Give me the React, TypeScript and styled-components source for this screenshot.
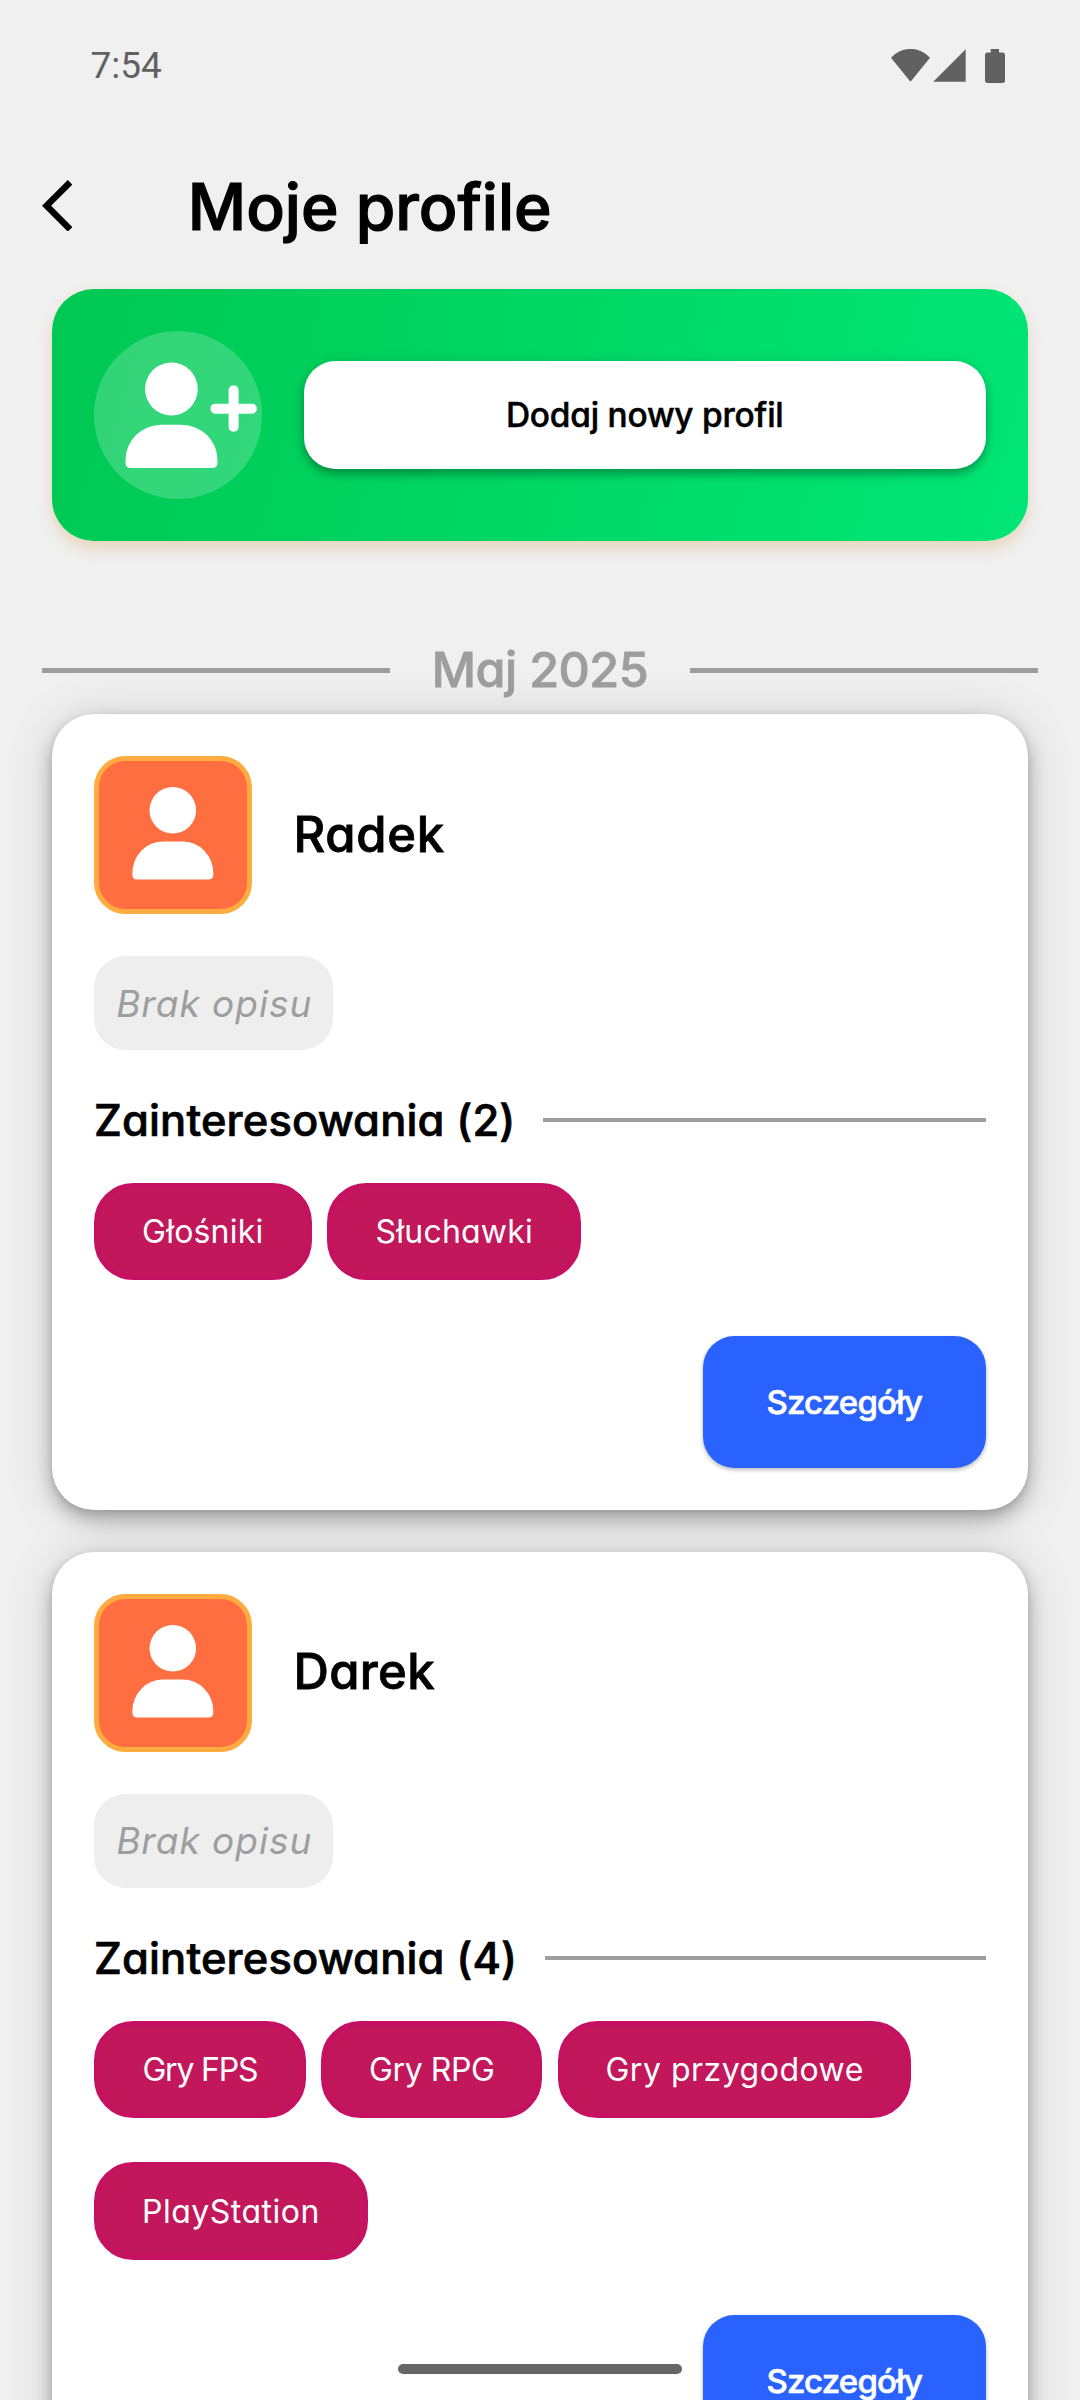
import React from "react";
import styled, { createGlobalStyle } from "styled-components";

const GlobalStyle = createGlobalStyle`
  *, *::before, *::after { box-sizing: border-box; }
  body { margin: 0; background: #f0f0f0; }
`;

const Screen = styled.div`
  position: relative;
  width: 1080px;
  height: 2400px;
  overflow: hidden;
  display: flex;
  flex-direction: column;
  background: #f0f0f0;
  color: #000;
  font-family: Inter, "Open Sans", sans-serif;
  font-feature-settings: "cv11";
`;

const StatusBar = styled.div`
  flex: none;
  height: 131px;
  padding: 0 75px 0 90.5px;
  display: flex;
  align-items: center;
  justify-content: space-between;
  color: #616161;
`;

const Clock = styled.span`
  font-family: Roboto, sans-serif;
  font-size: 37px;
`;

const StatusIcons = styled.svg`
  display: block;
  width: 114px;
  height: 34px;
  fill: currentColor;
`;

const Header = styled.header`
  flex: none;
  height: 150px;
  padding-left: 42px;
  display: flex;
  align-items: center;
`;

const BackIcon = styled.svg`
  display: block;
  width: 30.4px;
  height: 51.6px;
  margin: -1px 114.4px 0 0;
`;

const Label = styled.span<{ $size: number; $spacing?: number; $stroke?: number }>`
  white-space: nowrap;
  font-size: ${(p) => p.$size}px;
  font-weight: ${(p) => (p.$stroke ? 500 : 400)};
  letter-spacing: ${(p) => p.$spacing ?? 0}px;
  -webkit-text-stroke: ${(p) => p.$stroke ?? 0}px currentColor;
`;

const Title = styled(Label).attrs({ as: "h1" })`
  margin: 1px 0 0 1px;
`;

const Banner = styled.section`
  flex: none;
  height: 252px;
  margin: 8.25px 52.5px 0 52px;
  padding: 0 42px;
  display: flex;
  align-items: center;
  gap: 42px;
  border-radius: 42px;
  background: linear-gradient(104.5deg, #00c853, #00e676);
  box-shadow: 0 8px 14px rgba(215, 165, 95, 0.34);
`;

const BannerIcon = styled.svg`
  flex: none;
  width: 168px;
  height: 168px;
  border-radius: 50%;
  background: rgba(255, 255, 255, 0.2);
`;

const AddButton = styled.button`
  flex: 1;
  height: 108px;
  padding: 0;
  border: 0;
  border-radius: 31.5px;
  background: #fff;
  color: #000;
  font: inherit;
  font-feature-settings: inherit;
  box-shadow: 0 5px 10px rgba(0, 0, 0, 0.3), 0 1px 16px rgba(0, 0, 0, 0.06);
`;

const MonthRow = styled.div`
  flex: none;
  height: 88.4px;
  margin: 84.75px 42px 0;
  display: flex;
  align-items: center;
  color: #9e9e9e;
`;

const Rule = styled.div<{ $weight: number }>`
  flex: 1;
  height: ${(p) => p.$weight}px;
  background: #9e9e9e;
`;

const MonthName = styled.div`
  flex: 0 0 300.5px;
  padding-bottom: 2px;
  text-align: center;
`;

const CardList = styled.main`
  display: flex;
  flex-direction: column;
  gap: 42.5px;
  padding: 0 52.5px 0 52px;
`;

const Card = styled.article`
  flex: none;
  padding: 42px;
  display: flex;
  flex-direction: column;
  align-items: flex-start;
  border-radius: 42px;
  background: #fff;
  box-shadow: 0 9px 18px rgba(0, 0, 0, 0.26), 0 2px 6px rgba(0, 0, 0, 0.1),
    0 4px 50px rgba(0, 0, 0, 0.14);
`;

const Person = styled.div`
  display: flex;
  align-items: center;
  gap: 42px;
`;

const PersonName = styled.h2`
  margin: 0;
  padding-bottom: 2px;
  font-size: inherit;
  line-height: 1;
`;

const Avatar = styled.svg`
  width: 157.5px;
  height: 157.5px;
  border: 5.25px solid #ffab40;
  border-radius: 31.5px;
  background: #ff6e40;
`;

const Description = styled.div`
  width: 238.5px;
  height: 94.4px;
  margin-top: 42px;
  padding-left: 2px;
  display: flex;
  align-items: center;
  justify-content: center;
  border-radius: 31.5px;
  background: #eee;
  color: #9e9e9e;
  font-style: italic;
`;

const InterestsHeading = styled.div<{ $labelWidth: number }>`
  width: 100%;
  height: 56px;
  margin: 42px 0 34.8px;
  display: grid;
  grid-template-columns: ${(p) => p.$labelWidth}px 1fr;
  align-items: center;
`;

const Chips = styled.div`
  display: flex;
  flex-wrap: wrap;
  gap: 44.1px 15.75px;
`;

const Chip = styled.span<{ $width: number }>`
  width: ${(p) => p.$width}px;
  height: 97.4px;
  display: flex;
  align-items: center;
  justify-content: center;
  border: 5.25px solid #c51162;
  border-radius: 39.4px;
  background: #c2185b;
  color: #fff;
`;

const DetailsButton = styled.button`
  align-self: flex-end;
  width: 282.5px;
  height: 131.5px;
  margin-top: 55.7px;
  padding: 0;
  border: 0;
  border-radius: 31.5px;
  background: #2962ff;
  color: #fff;
  font: inherit;
  font-feature-settings: inherit;
  box-shadow: 0 2px 4px rgba(0, 0, 0, 0.28);
`;

const GestureBar = styled.div`
  position: absolute;
  left: 398px;
  bottom: 26px;
  width: 284px;
  height: 10px;
  border-radius: 5px;
  background: #666;
`;

interface Interest {
  name: string;
  width: number;
  spacing: number;
}

interface Profile {
  name: string;
  nameSpacing: number;
  labelWidth: number;
  interests: Interest[];
}

const profiles: Profile[] = [
  {
    name: "Radek",
    nameSpacing: 0.7,
    labelWidth: 449.2,
    interests: [
      { name: "Głośniki", width: 217.5, spacing: 0.2 },
      { name: "Słuchawki", width: 254, spacing: 0.2 },
    ],
  },
  {
    name: "Darek",
    nameSpacing: 0.3,
    labelWidth: 451.2,
    interests: [
      { name: "Gry FPS", width: 211.7, spacing: -1.2 },
      { name: "Gry RPG", width: 220.7, spacing: -0.4 },
      { name: "Gry przygodowe", width: 353.6, spacing: 0.5 },
      { name: "PlayStation", width: 273.8, spacing: 0.5 },
    ],
  },
];

function ProfileCard({ profile }: { profile: Profile }) {
  return (
    <Card>
      <Person>
        <Avatar viewBox="5.25 5.25 147 147" fill="#fff">
          <circle cx="78.8" cy="54.4" r="23.2" />
          <path d="M38.5 117 A30.8 31.6 0 0 1 69.3 85.4 H88.4 A30.8 31.6 0 0 1 119.2 117 V118.4 Q119.2 123.4 114.2 123.4 H43.5 Q38.5 123.4 38.5 118.4 Z" />
        </Avatar>
        <PersonName>
          <Label $size={49} $stroke={0.8} $spacing={profile.nameSpacing}>
            {profile.name}
          </Label>
        </PersonName>
      </Person>
      <Description>
        <Label $size={37} $spacing={1}>Brak opisu</Label>
      </Description>
      <InterestsHeading $labelWidth={profile.labelWidth}>
        <Label $size={43.5} $stroke={0.7} $spacing={0.13}>
          {`Zainteresowania (${profile.interests.length})`}
        </Label>
        <Rule $weight={4} />
      </InterestsHeading>
      <Chips>
        {profile.interests.map((interest) => (
          <Chip key={interest.name} $width={interest.width}>
            <Label $size={32} $spacing={interest.spacing}>{interest.name}</Label>
          </Chip>
        ))}
      </Chips>
      <DetailsButton>
        <Label $size={33} $stroke={0.6} $spacing={-0.8}>Szczegóły</Label>
      </DetailsButton>
    </Card>
  );
}

export default function App() {
  return (
    <Screen>
      <GlobalStyle />
      <StatusBar>
        <Clock>7:54</Clock>
        <StatusIcons viewBox="0 0 114 34">
          <path d="M0 8.8 A25.8 25.8 0 0 1 39 8.8 L19.5 32.8 Z" />
          <path d="M42.2 32.8 L74.7 0.3 V32.8 Z" />
          <path d="M99.7 0 H108 V3.5 H111.5 Q114 3.5 114 6 V31.5 Q114 34 111.5 34 H96.5 Q94 34 94 31.5 V6 Q94 3.5 96.5 3.5 H99.7 Z" />
        </StatusIcons>
      </StatusBar>
      <Header>
        <BackIcon viewBox="6 2 11.77 20">
          <path d="M17.77 3.77 16 2 6 12l10 10 1.77-1.77L9.54 12z" />
        </BackIcon>
        <Title $size={64} $stroke={1.2} $spacing={0}>Moje profile</Title>
      </Header>
      <Banner>
        <BannerIcon viewBox="0 0 168 168" fill="#fff">
          <circle cx="77.4" cy="58" r="26.4" />
          <path d="M31.5 129 A36 35.3 0 0 1 67.5 93.7 H87.5 A36 35.3 0 0 1 123.5 129 V131.5 Q123.5 137 118 137 H37 Q31.5 137 31.5 131.5 Z" />
          <rect x="116.5" y="72.7" width="46.3" height="10" rx="4.6" />
          <rect x="134.6" y="54.4" width="10" height="46.3" rx="4.6" />
        </BannerIcon>
        <AddButton>
          <Label $size={33.4} $stroke={0.5} $spacing={-0.2}>Dodaj nowy profil</Label>
        </AddButton>
      </Banner>
      <MonthRow>
        <Rule $weight={5.25} />
        <MonthName>
          <Label $size={48.5} $stroke={0.8} $spacing={-0.5}>Maj 2025</Label>
        </MonthName>
        <Rule $weight={5.25} />
      </MonthRow>
      <CardList>
        {profiles.map((profile) => (
          <ProfileCard key={profile.name} profile={profile} />
        ))}
      </CardList>
      <GestureBar />
    </Screen>
  );
}
